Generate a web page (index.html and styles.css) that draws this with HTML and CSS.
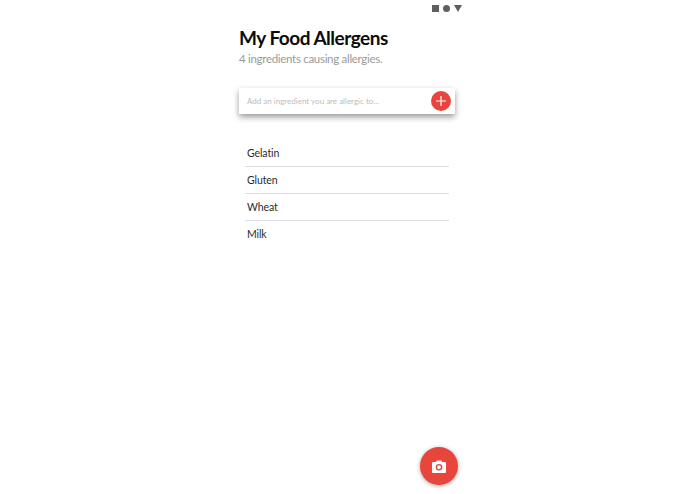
FILE: index.html
```html
<!DOCTYPE html>
<html lang="en">
<head>
    <meta charset="UTF-8">
    <meta name="viewport" content="width=device-width, initial-scale=1.0">
    <title>My Food Allergens</title>
    <link rel="stylesheet" href="styles.css">
</head>
<body>

<div class="screen">
    <div class="status-bar">
        <span class="status-square"></span>
        <span class="status-circle"></span>
        <svg class="status-triangle" width="8" height="7" viewBox="0 0 8 7"><path d="M0 0H8L4 7Z" fill="#5f5f5f"/></svg>
    </div>

    <h1 class="title">My Food Allergens</h1>
    <p class="subtitle">4 ingredients causing allergies.</p>

    <div class="add-box">
        <span class="add-placeholder">Add an ingredient you are allergic to…</span>
        <span class="add-button">
            <svg width="10" height="10" viewBox="0 0 10 10"><path d="M5 0V10M0 5H10" stroke="#fff" stroke-width="1.2"/></svg>
        </span>
    </div>

    <ul class="allergen-list">
        <li>Gelatin</li>
        <li>Gluten</li>
        <li>Wheat</li>
        <li>Milk</li>
    </ul>

    <div class="camera-button">
        <svg width="14" height="13" viewBox="0 0 14 13">
            <path fill="#fff" fill-rule="evenodd" d="M1 2H3.8L4.8 .5H9.2L10.2 2H13A1 1 0 0 1 14 3V12A1 1 0 0 1 13 13H1A1 1 0 0 1 0 12V3A1 1 0 0 1 1 2ZM7 3.9A3.3 3.3 0 1 0 7 10.5A3.3 3.3 0 1 0 7 3.9ZM7 5.3A1.9 1.9 0 1 1 7 9.1A1.9 1.9 0 1 1 7 5.3Z"/>
        </svg>
    </div>
</div>

</body>
</html>
```
FILE: styles.css
```css
html, body {
    margin: 0;
    height: 100%;
    background-color: #fff;
    overflow: hidden;
}
body {
    font-family: Lato, Arial, sans-serif;
}
.screen {
    width: 216px;
    height: 494px;
    margin-left: 239px;
    position: relative;
}
.status-bar {
    display: flex;
    justify-content: flex-end;
    align-items: center;
    gap: 4px;
    height: 7px;
    padding-top: 5px;
    margin-right: -7px;
}
.status-square {
    width: 7px;
    height: 7px;
    background-color: #5f5f5f;
}
.status-circle {
    width: 7px;
    height: 7px;
    border-radius: 50%;
    background-color: #5f5f5f;
}
.title {
    margin: 13px 0 0;
    font-size: 19px;
    line-height: 26px;
    font-weight: 700;
    letter-spacing: -0.5px;
    color: #0c0c0c;
}
.subtitle {
    margin: 0;
    font-size: 11.5px;
    line-height: 16px;
    letter-spacing: -0.3px;
    color: #9a9a9a;
}
.add-box {
    display: flex;
    align-items: center;
    justify-content: space-between;
    height: 26px;
    margin-top: 21px;
    padding: 0 4px 0 8px;
    background-color: #fff;
    box-shadow: 0 3px 6px rgba(0, 0, 0, 0.4);
}
.add-placeholder {
    font-size: 8px;
    color: #bdbdbd;
}
.add-button {
    display: flex;
    align-items: center;
    justify-content: center;
    width: 20px;
    height: 20px;
    border-radius: 50%;
    background-color: #e8453c;
}
.allergen-list {
    list-style: none;
    margin: 26px 6px 0;
    padding: 0;
}
.allergen-list li {
    height: 26px;
    line-height: 26px;
    padding-left: 2px;
    font-size: 10.5px;
    letter-spacing: -0.1px;
    color: #2b2b2b;
    border-bottom: 1px solid #dedede;
}
.allergen-list li:last-child {
    border-bottom: none;
}
.camera-button {
    position: absolute;
    left: 181px;
    top: 447px;
    width: 38px;
    height: 38px;
    border-radius: 50%;
    background-color: #e8453c;
    box-shadow: 0 1px 4px rgba(0, 0, 0, 0.35);
    display: flex;
    align-items: center;
    justify-content: center;
}
```
